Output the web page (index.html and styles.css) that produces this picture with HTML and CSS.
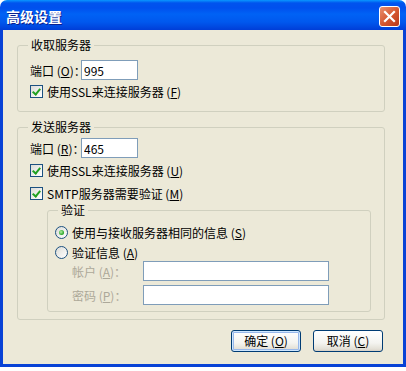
FILE: index.html
```html
<!DOCTYPE html>
<html lang="zh-CN">

<head>
	<meta charset="UTF-8">
	<title>高级设置</title>
	<link rel="stylesheet" href="styles.css">
</head>

<body>
	<div class="window">
		<div class="titlebar">
			<span class="title">高级设置</span>
			<button class="close" aria-label="关闭">
				<svg width="13" height="13" viewBox="0 0 13 13">
					<path d="M2 2 L11 11 M11 2 L2 11" stroke="#fff" stroke-width="2.2" stroke-linecap="square" />
				</svg>
			</button>
		</div>

		<div class="content">
			<!-- 收取服务器 -->
			<fieldset class="group group-in">
				<legend>收取服务器</legend>
				<div class="row port-row">
					<label for="inPort">端口 (<u>O</u>)：</label>
					<input class="text" id="inPort" type="text" value="995">
				</div>
				<div class="row check-row first">
					<span class="check checked"></span>
					<span>使用SSL来连接服务器 (<u>F</u>)</span>
				</div>
			</fieldset>

			<!-- 发送服务器 -->
			<fieldset class="group group-out">
				<legend>发送服务器</legend>
				<div class="row port-row">
					<label for="outPort">端口 (<u>R</u>)：</label>
					<input class="text" id="outPort" type="text" value="465">
				</div>
				<div class="row check-row first">
					<span class="check checked"></span>
					<span>使用SSL来连接服务器 (<u>U</u>)</span>
				</div>
				<div class="row check-row second">
					<span class="check checked"></span>
					<span>SMTP服务器需要验证 (<u>M</u>)</span>
				</div>

				<fieldset class="group group-auth">
					<legend>验证</legend>
					<div class="row radio-row">
						<span class="radio checked"></span>
						<span>使用与接收服务器相同的信息 (<u>S</u>)</span>
					</div>
					<div class="row radio-row second">
						<span class="radio"></span>
						<span>验证信息 (<u>A</u>)</span>
					</div>
					<div class="cred">
						<label class="disabled">帐户 (<u>A</u>)：</label>
						<input class="text" type="text" disabled>
						<label class="disabled">密码 (<u>P</u>)：</label>
						<input class="text" type="password" disabled>
					</div>
				</fieldset>
			</fieldset>

			<div class="buttons">
				<button class="btn default">确定 (<u>O</u>)</button>
				<button class="btn">取消 (<u>C</u>)</button>
			</div>
		</div>
	</div>
</body>

</html>
```

FILE: styles.css
```css
body {
	margin: 0;
	background-color: #fff;
	font-family: "Noto Sans CJK SC", "Liberation Sans", sans-serif;
	font-size: 12px;
	color: #000;
}

.window {
	width: 406px;
	height: 367px;
	display: flex;
	flex-direction: column;
}

.titlebar {
	height: 30px;
	flex: none;
	display: flex;
	align-items: center;
	justify-content: space-between;
	padding: 0 6px 0 6px;
	border-radius: 7px 7px 0 0;
	background: linear-gradient(#0997ff 0, #0053ee 3px, #0050ee 8px, #0062f5 14px, #0058ee 22px, #0048e0 27px, #003dd7 30px);
}

.title {
	color: #fff;
	font-size: 14px;
	font-weight: bold;
	text-shadow: 1px 1px 0 #0a1f8f;
	margin-top: 1px;
}

.close {
	width: 21px;
	height: 21px;
	padding: 0;
	border: 1px solid #fff;
	border-radius: 3px;
	background: linear-gradient(135deg, #e98f6f, #d4552e 55%, #b9381a);
	display: flex;
	align-items: center;
	justify-content: center;
	margin-top: 3px;
}

.content {
	flex: 1;
	background-color: #ece9d8;
	border: 3px solid #0831d9;
	border-top: none;
	border-color: #0842d6;
	display: flex;
	flex-direction: column;
}

.group {
	border: 1px solid #d0d0bf;
	border-radius: 3px;
	margin: 0;
	min-width: 0;
}

.group legend {
	padding: 0 3px;
	margin-left: -2px;
	line-height: 14px;
	height: 14px;
}

.group-in {
	margin: 8px 18px 0 14px;
	padding: 8px 12px 13px 12px;
}

.group-out {
	margin: 8px 18px 0 14px;
	padding: 4px 12px 7px 12px;
}

.group-auth {
	margin: 3px 1px 0 17px;
	padding: 9px 7px 6px 7px;
}

.group-auth legend {
	margin-left: 3px;
}

.row {
	display: flex;
	align-items: center;
}

.port-row {
	height: 20px;
}

.port-row label {
	width: 51px;
	white-space: nowrap;
}

.port-row .text {
	width: 57px;
}

.text {
	box-sizing: border-box;
	height: 20px;
	border: 1px solid #7f9db9;
	background-color: #fff;
	padding: 0 2px;
	font-family: "Noto Sans CJK SC", "Liberation Sans", sans-serif;
	font-size: 12px;
	color: #000;
	outline: none;
}

.check-row {
	height: 13px;
	gap: 4px;
	line-height: 13px;
}

.group-in .check-row.first {
	margin-top: 5px;
}

.group-out .check-row.first {
	margin-top: 6px;
}

.group-out .check-row.second {
	margin-top: 10px;
}

.check {
	width: 13px;
	height: 13px;
	box-sizing: border-box;
	border: 1px solid #1c5180;
	background: linear-gradient(135deg, #dcdcd7, #fff);
	flex: none;
	position: relative;
}

.check.checked::after {
	content: "";
	position: absolute;
	left: 3px;
	top: 1px;
	width: 3px;
	height: 6px;
	border: solid #21a121;
	border-width: 0 2px 2px 0;
	transform: rotate(40deg);
}

.radio-row {
	height: 13px;
	gap: 4px;
	line-height: 13px;
}

.radio-row.second {
	margin-top: 7px;
}

.radio {
	width: 13px;
	height: 13px;
	box-sizing: border-box;
	border: 1px solid #1c5180;
	border-radius: 50%;
	background: linear-gradient(135deg, #dcdcd7, #fff);
	flex: none;
	display: flex;
	align-items: center;
	justify-content: center;
}

.radio.checked::after {
	content: "";
	width: 5px;
	height: 5px;
	border-radius: 50%;
	background: radial-gradient(circle at 40% 40%, #b5f0a6, #21a121 70%);
}

.cred {
	display: grid;
	grid-template-columns: 71px 186px;
	row-gap: 4px;
	align-items: center;
	margin: 2px 0 0 17px;
}

.disabled {
	color: #aca899;
}

.buttons {
	display: flex;
	justify-content: flex-end;
	gap: 12px;
	margin: 10px 20px 0 0;
}

.btn {
	width: 70px;
	height: 22px;
	padding: 0;
	border: 1px solid #003c74;
	border-radius: 3px;
	background: linear-gradient(#ffffff, #f4f4f0 60%, #e3e0d6 90%, #d6d0c5);
	font-family: "Noto Sans CJK SC", "Liberation Sans", sans-serif;
	font-size: 12px;
	color: #000;
	line-height: 18px;
}

.btn.default {
	box-shadow: inset 0 0 0 1px #cee7ff, inset 0 0 0 2px #98b8ea;
}
```
